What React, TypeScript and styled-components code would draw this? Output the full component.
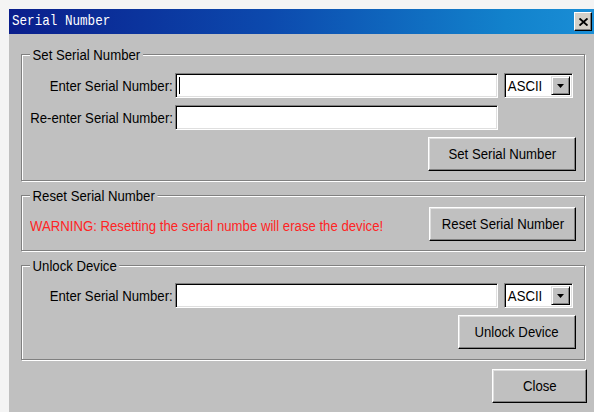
import styled, { createGlobalStyle } from 'styled-components'

const GlobalStyle = createGlobalStyle`
  html, body {
    margin: 0;
    padding: 0;
    background: #f4f4f4;
  }

  body {
    font-family: "Liberation Sans", Arial, sans-serif;
    font-size: 15.5px;
    color: #000;
  }
`

// the dialog font is a tall, condensed sans: squeeze Arial metrics horizontally
const Narrow = styled.span<{ $origin?: string }>`
  display: inline-block;
  white-space: nowrap;
  transform: scaleX(0.85);
  transform-origin: ${p => p.$origin ?? 'left'} center;
`

const Page = styled.div`
  height: 412px;
  padding: 9px 0 0 9px;
  box-sizing: border-box;
  overflow: hidden;
`

const Window = styled.div`
  display: flex;
  flex-direction: column;
  height: 403px;
  background: #c0c0c0;
`

const TitleBar = styled.div`
  display: flex;
  align-items: center;
  justify-content: space-between;
  height: 25px;
  padding: 0 2px 0 3px;
  background: linear-gradient(90deg, #0a1e8c 0%, #0c4aae 45%, #1282cc 85%, #1a8ed6 100%);
`

const Title = styled.span`
  display: inline-block;
  font-family: "Liberation Mono", "DejaVu Sans Mono", monospace;
  font-size: 15px;
  color: #fff;
  transform: scaleX(0.84);
  transform-origin: left center;
  white-space: nowrap;
`

const CloseBox = styled.div`
  display: flex;
  align-items: center;
  justify-content: center;
  width: 18px;
  height: 19px;
  box-sizing: border-box;
  background: #d4d0c8;
  border-top: 1px solid #fff;
  border-left: 1px solid #fff;
  border-right: 1px solid #000;
  border-bottom: 1px solid #000;
  box-shadow: inset -1px -1px 0 #808080;
`

const Body = styled.div`
  display: flex;
  flex-direction: column;
  padding: 20px 9px 0 12px;
`

const GroupBox = styled.div<{ $pad: string; $gap?: number; $spaced?: boolean }>`
  position: relative;
  display: flex;
  flex-direction: column;
  gap: ${p => p.$gap ?? 0}px;
  margin-top: ${p => (p.$spaced ? 14 : 0)}px;
  padding: ${p => p.$pad};
  border: 1px solid #808080;
  box-shadow: inset 1px 1px 0 #fff, 1px 1px 0 #fff;
`

const Caption = styled.span`
  position: absolute;
  top: -9px;
  left: 8px;
  padding: 0 3px;
  line-height: 17px;
  background: #c0c0c0;
  white-space: nowrap;
  transform: scaleX(0.85);
  transform-origin: left center;
`

const FieldRow = styled.div`
  display: flex;
  align-items: center;
  height: 25px;
`

const Label = styled.span`
  display: flex;
  justify-content: flex-end;
  flex-shrink: 0;
  width: 151px;
  margin-right: 2px;
`

const TextBox = styled.div`
  position: relative;
  flex-shrink: 0;
  width: 323px;
  height: 25px;
  box-sizing: border-box;
  background: #fff;
  border-top: 1px solid #808080;
  border-left: 1px solid #808080;
  border-right: 1px solid #fff;
  border-bottom: 1px solid #fff;
  box-shadow: inset 1px 1px 0 #000, inset -1px -1px 0 #dfdfdf;
`

const Caret = styled.span`
  position: absolute;
  left: 3px;
  top: 3px;
  bottom: 3px;
  width: 1px;
  background: #000;
`

const Combo = styled.div`
  display: flex;
  align-items: center;
  justify-content: space-between;
  flex-shrink: 0;
  width: 69px;
  height: 25px;
  margin-left: 6px;
  padding: 2px;
  box-sizing: border-box;
  background: #fff;
  border-top: 1px solid #808080;
  border-left: 1px solid #808080;
  border-right: 1px solid #fff;
  border-bottom: 1px solid #fff;
  box-shadow: inset 1px 1px 0 #000, inset -1px -1px 0 #dfdfdf;
`

const ComboText = styled(Narrow)`
  padding-left: 1px;
  line-height: 19px;
`

const DropButton = styled.div`
  display: flex;
  align-items: center;
  justify-content: center;
  width: 19px;
  height: 19px;
  box-sizing: border-box;
  background: #c0c0c0;
  border-top: 1px solid #dfdfdf;
  border-left: 1px solid #dfdfdf;
  border-right: 1px solid #000;
  border-bottom: 1px solid #000;
  box-shadow: inset 1px 1px 0 #fff, inset -1px -1px 0 #808080;
`

const ButtonRow = styled.div`
  display: flex;
  justify-content: flex-end;
`

const Button = styled.button<{ $width: number }>`
  display: flex;
  align-items: center;
  justify-content: center;
  flex-shrink: 0;
  width: ${p => p.$width}px;
  height: 34px;
  padding: 0;
  box-sizing: border-box;
  font: inherit;
  color: #000;
  background: #c0c0c0;
  border-top: 1px solid #fff;
  border-left: 1px solid #fff;
  border-right: 1px solid #000;
  border-bottom: 1px solid #000;
  box-shadow: inset -1px -1px 0 #808080, inset 1px 1px 0 #dfdfdf;
`

const ResetRow = styled(GroupBox)`
  flex-direction: row;
  align-items: center;
  justify-content: space-between;
`

const Warning = styled(Narrow)`
  flex: 1;
  min-width: 0;
  margin-top: 3px;
  color: #ff2424;
`

const Footer = styled.div`
  display: flex;
  justify-content: flex-end;
  margin: 9px -2px 0 0;
`

const CloseIcon = () => (
  <svg width="9" height="8" viewBox="0 0 9 8">
    <path d="M0.5 0.5 L8.5 7.5 M8.5 0.5 L0.5 7.5" stroke="#000" strokeWidth="1.9" />
  </svg>
)

const ArrowDown = () => (
  <svg width="7" height="4" viewBox="0 0 7 4">
    <path d="M0 0 H7 L3.5 4 Z" fill="#000" />
  </svg>
)

const EncodingSelect = () => (
  <Combo>
    <ComboText>ASCII</ComboText>
    <DropButton>
      <ArrowDown />
    </DropButton>
  </Combo>
)

const FieldLabel = ({ text }: { text: string }) => (
  <Label>
    <Narrow $origin="right">{text}</Narrow>
  </Label>
)

const PushButton = ({ width, text }: { width: number; text: string }) => (
  <Button $width={width}>
    <Narrow $origin="center">{text}</Narrow>
  </Button>
)

const App = () => {
  return (
    <Page>
      <GlobalStyle />
      <Window>
        <TitleBar>
          <Title>Serial Number</Title>
          <CloseBox>
            <CloseIcon />
          </CloseBox>
        </TitleBar>
        <Body>
          <GroupBox $pad="18px 8px 9px 0" $gap={7}>
            <Caption>Set Serial Number</Caption>
            <FieldRow>
              <FieldLabel text="Enter Serial Number:" />
              <TextBox>
                <Caret />
              </TextBox>
              <EncodingSelect />
            </FieldRow>
            <FieldRow>
              <FieldLabel text="Re-enter Serial Number:" />
              <TextBox />
            </FieldRow>
            <ButtonRow>
              <PushButton width={148} text="Set Serial Number" />
            </ButtonRow>
          </GroupBox>

          <ResetRow $pad="11px 8px 9px 8px" $spaced>
            <Caption>Reset Serial Number</Caption>
            <Warning>WARNING: Resetting the serial numbe will erase the device!</Warning>
            <PushButton width={147} text="Reset Serial Number" />
          </ResetRow>

          <GroupBox $pad="17px 8px 10px 0" $gap={7} $spaced>
            <Caption>Unlock Device</Caption>
            <FieldRow>
              <FieldLabel text="Enter Serial Number:" />
              <TextBox />
              <EncodingSelect />
            </FieldRow>
            <ButtonRow>
              <PushButton width={118} text="Unlock Device" />
            </ButtonRow>
          </GroupBox>

          <Footer>
            <PushButton width={95} text="Close" />
          </Footer>
        </Body>
      </Window>
    </Page>
  )
}

export default App
